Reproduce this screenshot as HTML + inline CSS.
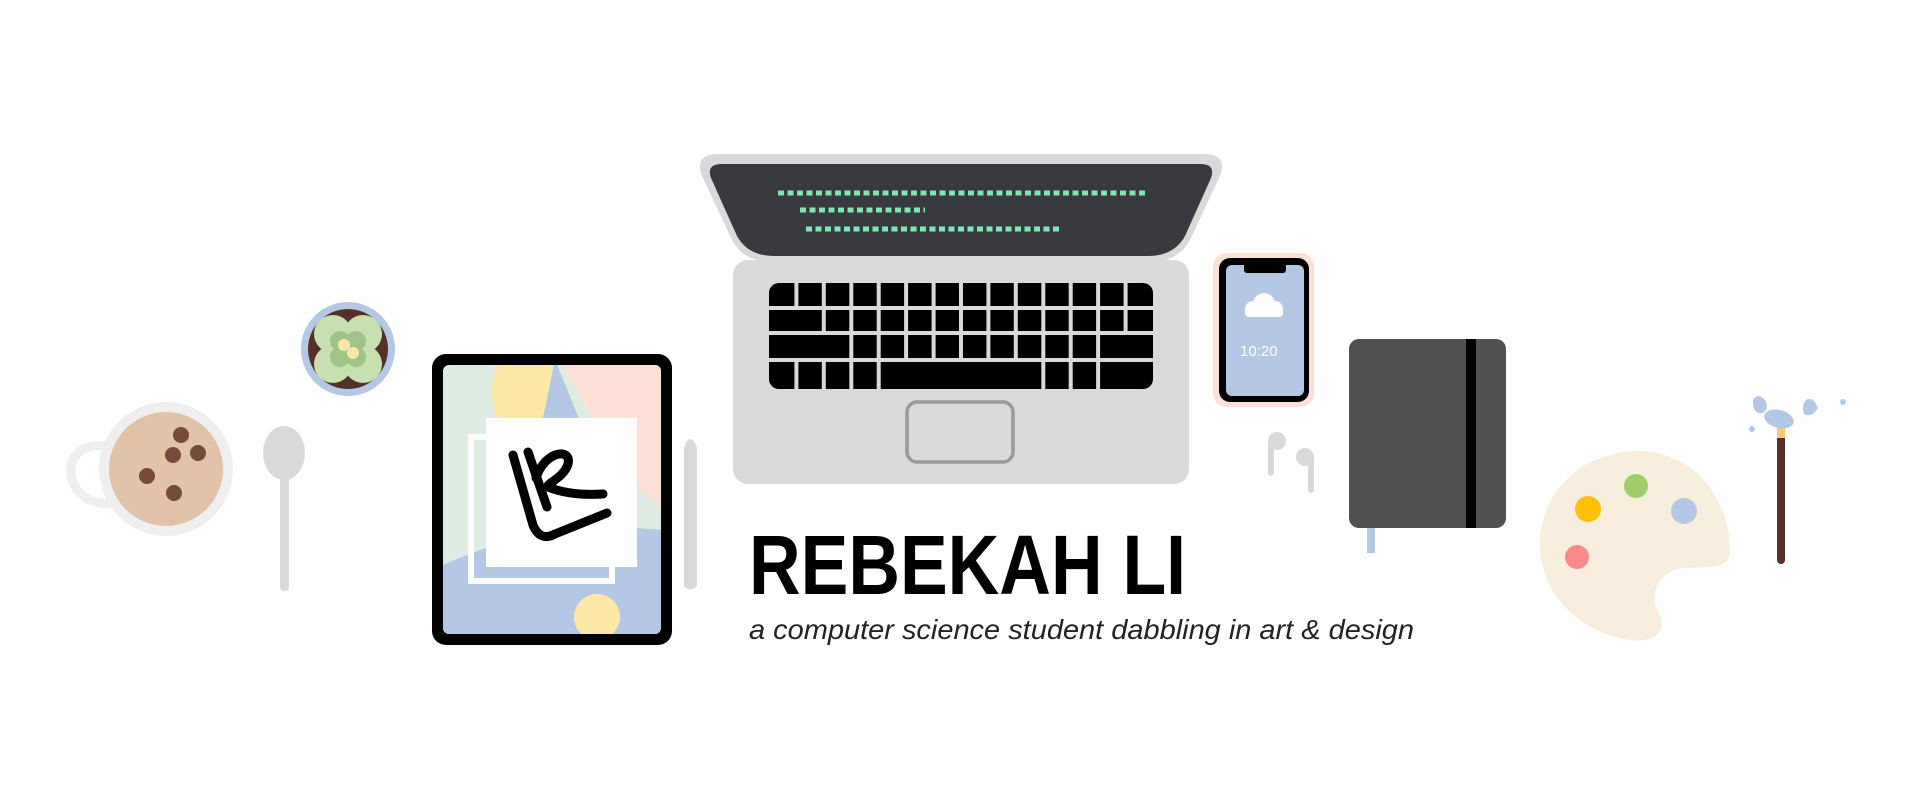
<!DOCTYPE html>
<html><head><meta charset="utf-8"><style>
html,body{margin:0;padding:0;background:#fff;width:1920px;height:800px;overflow:hidden}
svg{display:block}
</style></head><body>
<svg width="1920" height="800" viewBox="0 0 1920 800" xmlns="http://www.w3.org/2000/svg">
<!-- cup -->
<path d="M112,447 C80,440 66,460 72,480 C78,498 95,505 112,503" fill="none" stroke="#efefef" stroke-width="9"/>
<circle cx="166" cy="469" r="67" fill="#efefef"/>
<circle cx="166" cy="469" r="57" fill="#e0c3a8"/>
<g fill="#754c3a"><circle cx="181" cy="435" r="8"/><circle cx="173" cy="455" r="8"/><circle cx="198" cy="453" r="8"/><circle cx="147" cy="476" r="8"/><circle cx="174" cy="493" r="8"/></g>
<!-- spoon -->
<ellipse cx="284" cy="453" rx="21" ry="27" fill="#d9d9d9"/>
<rect x="280" y="470" width="9" height="121" rx="4" fill="#d9d9d9"/>
<!-- plant -->
<circle cx="348" cy="349" r="47" fill="#b4c8e6"/>
<circle cx="348" cy="349" r="40" fill="#55302a"/>
<g fill="#c6e0b0"><circle cx="333" cy="334" r="19"/><circle cx="363" cy="334" r="19"/><circle cx="333" cy="364" r="19"/><circle cx="363" cy="364" r="19"/></g>
<g fill="#a0c488"><circle cx="340" cy="341" r="10"/><circle cx="356" cy="341" r="10"/><circle cx="340" cy="357" r="10"/><circle cx="356" cy="357" r="10"/></g>
<circle cx="344" cy="345" r="6" fill="#fde8a8"/><circle cx="353" cy="353" r="6" fill="#fde8a8"/>
<!-- ipad -->
<rect x="432" y="354" width="240" height="291" rx="14" fill="#000"/>
<clipPath id="scr"><rect x="443" y="365" width="218" height="269" rx="6"/></clipPath>
<g clip-path="url(#scr)">
<rect x="443" y="365" width="218" height="269" fill="#dfece4"/>
<path d="M563,365 L661,365 L661,510 L620,470 Z" fill="#fde0d6"/>
<ellipse cx="524" cy="392" rx="32" ry="44" fill="#fde8a8"/>
<path d="M555,360 L600,470 L530,480 Z" fill="#b4c8e6"/>
<path d="M443,565 C500,540 560,520 661,530 L661,640 L443,640 Z" fill="#b4c8e6"/>
<circle cx="597" cy="617" r="23" fill="#fde8a8"/>
</g>
<rect x="471" y="437" width="141" height="144" fill="none" stroke="#fff" stroke-width="6"/>
<rect x="486" y="418" width="151" height="149" fill="#fff"/>
<g fill="none" stroke="#000" stroke-width="9" stroke-linecap="round" stroke-linejoin="round">
<path d="M513,455 L533,525 Q540,542 555,534 L607,513"/>
<path d="M528,452 L547,507"/>
<path d="M536,478 C545,450 572,448 568,464 C564,478 545,484 548,487 Q570,496 603,494"/>
</g>
<!-- pencil -->
<path d="M684,448 Q690,430 697,448 L697,586 Q690,593 684,586 Z" fill="#d9d9d9"/>
<!-- laptop -->
<path d="M718,154 L1204,154 Q1228,154 1220,176 L1190,240 Q1178,262 1150,262 L772,262 Q744,262 732,240 L702,176 Q694,154 718,154 Z" fill="#d9d9d9"/>
<path d="M722,164 L1200,164 Q1216,164 1211,178 L1185,236 Q1174,256 1148,256 L774,256 Q748,256 737,236 L711,178 Q706,164 722,164 Z" fill="#393a40"/>
<g stroke="#7de8b4" stroke-width="5" stroke-dasharray="6 3.5"><line x1="778" y1="193" x2="1145" y2="193"/><line x1="800" y1="210" x2="925" y2="210"/><line x1="806" y1="229" x2="1060" y2="229"/></g>
<rect x="733" y="260" width="456" height="224" rx="15" fill="#d9d9d9"/>
<rect x="769" y="283" width="384" height="106" rx="10" fill="#000"/>
<g stroke="#d9d9d9" stroke-width="4">
<line x1="769" y1="308" x2="1153" y2="308"/><line x1="769" y1="333" x2="1153" y2="333"/><line x1="769" y1="360" x2="1153" y2="360"/>
<path d="M796.4,283V308M823.8,283V308M851.3,283V308M878.7,283V308M906.1,283V308M933.6,283V308M961,283V308M988.4,283V308M1015.8,283V308M1043.3,283V308M1070.7,283V308M1098.1,283V308M1125.6,283V308"/>
<path d="M823.8,308V333M851.3,308V333M878.7,308V333M906.1,308V333M933.6,308V333M961,308V333M988.4,308V333M1015.8,308V333M1043.3,308V333M1070.7,308V333M1098.1,308V333M1125.6,308V333"/>
<path d="M851.3,333V360M878.7,333V360M906.1,333V360M933.6,333V360M961,333V360M988.4,333V360M1015.8,333V360M1043.3,333V360M1070.7,333V360M1098.1,333V360"/>
<path d="M796.4,360V389M823.8,360V389M851.3,360V389M878.7,360V389M1043.3,360V389M1070.7,360V389M1098.1,360V389"/>
</g>
<rect x="907" y="402" width="106" height="60" rx="10" fill="none" stroke="#999" stroke-width="3.5"/>
<!-- title -->
<text x="749" y="594" font-family="Liberation Sans, sans-serif" font-weight="bold" font-size="84" textLength="437" lengthAdjust="spacingAndGlyphs" fill="#000">REBEKAH LI</text>
<text x="749" y="639" font-family="Liberation Sans, sans-serif" font-style="italic" font-size="28" textLength="665" lengthAdjust="spacingAndGlyphs" fill="#222">a computer science student dabbling in art &amp; design</text>
<!-- phone -->
<rect x="1213" y="253" width="101" height="154" rx="14" fill="#fde0d6"/>
<rect x="1219" y="258" width="90" height="144" rx="11" fill="#000"/>
<rect x="1226" y="265" width="78" height="131" rx="6" fill="#b4c8e6"/>
<rect x="1244" y="262" width="42" height="11" rx="3" fill="#000"/>
<g fill="#fff"><circle cx="1264" cy="304" r="11"/><circle cx="1253" cy="309" r="8"/><circle cx="1275" cy="309" r="8"/><rect x="1245" y="308" width="38" height="9" rx="4"/></g>
<text x="1240" y="356" font-family="Liberation Sans, sans-serif" font-size="15" fill="#fff">10:20</text>
<!-- airpods -->
<g fill="#d9d9d9"><circle cx="1277" cy="441" r="9"/><rect x="1268" y="441" width="6" height="35" rx="3"/><circle cx="1305" cy="457" r="9"/><rect x="1308" y="457" width="6" height="36" rx="3"/></g>
<!-- notebook -->
<rect x="1367" y="524" width="8" height="29" fill="#b4c8e6"/>
<rect x="1349" y="339" width="157" height="189" rx="10" fill="#515151"/>
<rect x="1466" y="339" width="10" height="189" fill="#000"/>
<!-- palette -->
<path d="M1640,451 C1700,453 1730,505 1730,550 C1730,560 1724,567 1710,567 L1685,568 C1655,570 1648,600 1660,615 C1668,635 1650,643 1630,640 C1575,632 1540,590 1540,545 C1540,490 1585,450 1640,451 Z" fill="#f8eedd"/>
<g><circle cx="1588" cy="509" r="13" fill="#fdc10a"/><circle cx="1636" cy="486" r="12" fill="#a0cc6a"/><circle cx="1684" cy="511" r="13" fill="#b4c8e6"/><circle cx="1577" cy="557" r="12" fill="#fd8a8a"/></g>
<!-- brush -->
<rect x="1777" y="430" width="8" height="134" rx="4" fill="#55302a"/>
<rect x="1777" y="422" width="8" height="16" fill="#fdc870"/>
<g fill="#b4c8e6"><ellipse cx="1779" cy="419" rx="15" ry="9" transform="rotate(15 1779 419)"/><path d="M1753,400 Q1758,392 1765,400 Q1770,410 1762,413 Q1752,414 1753,400Z"/><path d="M1806,400 Q1813,396 1818,408 Q1812,418 1804,414 Q1801,406 1806,400Z"/><circle cx="1752" cy="429" r="3"/><circle cx="1843" cy="402" r="3"/></g>
</svg>
</body></html>
